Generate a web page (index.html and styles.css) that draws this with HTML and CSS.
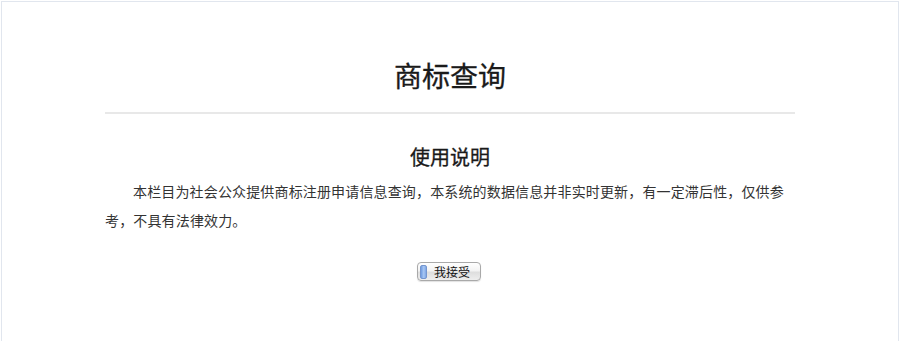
FILE: index.html
```html
<!DOCTYPE html>
<html lang="zh-CN">
<head>
<meta charset="utf-8">
<title>商标查询</title>
<link rel="stylesheet" href="styles.css">
</head>
<body>
<div class="page">
  <div class="content">
    <h1 class="title">商标查询</h1>
    <div class="rule"></div>
    <h2 class="subtitle">使用说明</h2>
    <p class="notice">本栏目为社会公众提供商标注册申请信息查询，本系统的数据信息并非实时更新，有一定滞后性，仅供参考，不具有法律效力。</p>
    <div class="actions">
      <button class="accept" type="button"><span class="accept-mark"></span><span class="accept-label">我接受</span></button>
    </div>
  </div>
</div>
</body>
</html>
```

FILE: styles.css
```css
html, body {
  margin: 0;
  padding: 0;
  background: #ffffff;
}
body {
  font-family: "Noto Sans CJK SC", "Noto Sans", "Liberation Sans", sans-serif;
  color: #333333;
}
.page {
  margin: 1px 1px 0 1px;
  border: 1px solid #e1e6ee;
  min-height: 400px;
  box-sizing: border-box;
}
.content {
  width: 690px;
  margin: 0 auto;
  padding-top: 53px;
}
.title {
  margin: 0;
  font-size: 28px;
  line-height: 40px;
  font-weight: normal;
  color: #1a1a1a;
  text-align: center;
  -webkit-text-stroke: 0.3px #1a1a1a;
}
.rule {
  margin-top: 17px;
  height: 2px;
  background: #e8e8e8;
}
.subtitle {
  margin: 28px 0 0 0;
  font-size: 20px;
  line-height: 30px;
  font-weight: normal;
  color: #1a1a1a;
  text-align: center;
  -webkit-text-stroke: 0.3px #1a1a1a;
}
.notice {
  margin: 5px 0 0 0;
  padding-right: 6px;
  font-size: 14px;
  line-height: 29px;
  letter-spacing: 0.15px;
  text-indent: 2em;
  color: #333333;
}
.actions {
  margin-top: 27px;
  display: flex;
  justify-content: center;
}
.accept {
  display: flex;
  align-items: center;
  width: 64px;
  height: 19px;
  padding: 0 0 0 2px;
  margin: 0 0 0 -2px;
  border: 1px solid #a9a9a9;
  border-radius: 4px;
  background: linear-gradient(#ffffff 0%, #f3f3f3 45%, #dedede 55%, #eeeeee 100%);
  box-shadow: 0 1px 1px rgba(0,0,0,0.12);
  box-sizing: border-box;
  font-family: "Noto Sans CJK SC", sans-serif;
  font-size: 12px;
  line-height: 1;
  color: #111111;
  cursor: pointer;
}
.accept-mark {
  width: 7px;
  height: 14px;
  border-radius: 2px;
  background: linear-gradient(90deg, #6f9be0 0%, #a9c8f4 55%, #7fa6e4 100%);
  border: 1px solid #7596cf;
  box-sizing: border-box;
  flex: none;
}
.accept-label {
  flex: 1;
  text-align: center;
  padding-right: 3px;
}
```
